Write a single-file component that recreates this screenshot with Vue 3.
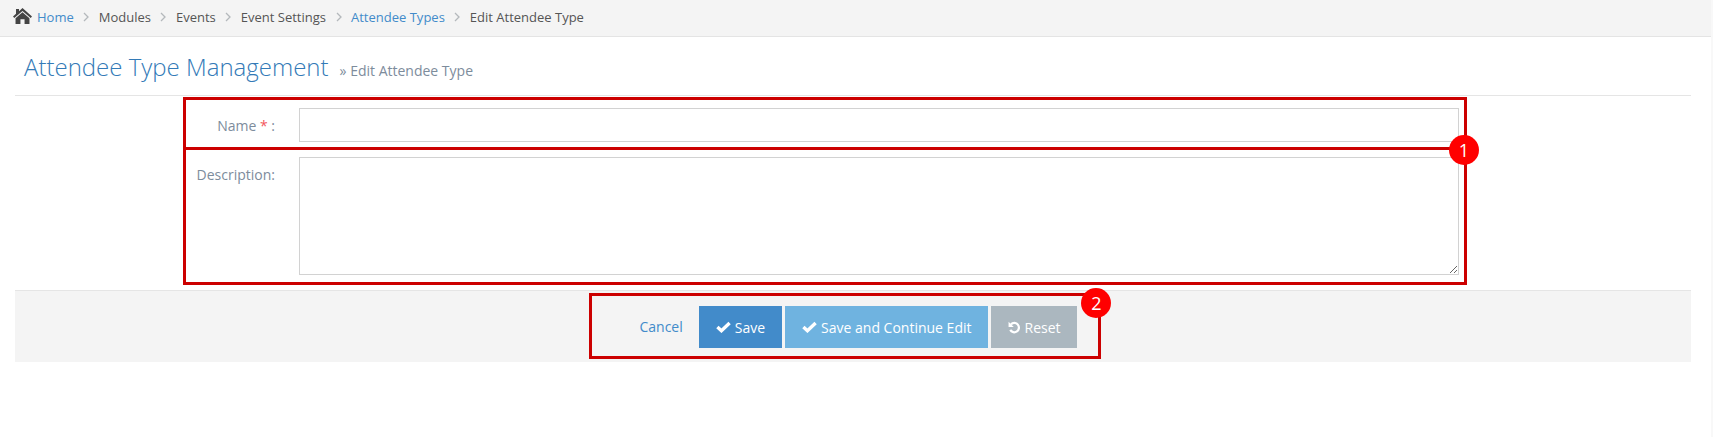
<template>
  <div class="page">
    <nav class="crumbs">
      <svg class="home" viewBox="0 0 24 20" width="19" height="16">
        <path d="M12 0 L24 10.6 L22.4 12.6 L12 3.6 L1.6 12.6 L0 10.6 L3.8 7.2 L3.8 1.2 L7.6 1.2 L7.6 3.9 Z" fill="#444" />
        <path d="M12 5.4 L20.8 12.8 L20.8 20 L14.6 20 L14.6 14 L9.4 14 L9.4 20 L3.2 20 L3.2 12.8 Z" fill="#444" />
      </svg>
      <template v-for="(c, i) in crumbs" :key="c.text">
        <span :class="c.link ? 'link' : 'plain'">{{ c.text }}</span>
        <svg v-if="i < crumbs.length - 1" class="sep" viewBox="0 0 6 10" width="6" height="10">
          <path d="M1 1 L5 5 L1 9" fill="none" stroke="#b4b8bc" stroke-width="1.3" />
        </svg>
      </template>
    </nav>

    <div class="content">
      <div class="heading">
        <h1>Attendee Type Management</h1>
        <small>» Edit Attendee Type</small>
      </div>

      <form class="form" @submit.prevent>
        <div class="row row-name">
          <label>Name <span class="req">*</span> :</label>
          <input type="text" />
        </div>
        <div class="row row-desc">
          <label>Description:</label>
          <textarea></textarea>
        </div>
        <div class="mark mark-one"><span class="badge">1</span><i class="divider"></i></div>
      </form>

      <div class="actions">
        <div class="action-inner">
          <a class="cancel">Cancel</a>
          <button class="btn blue">
            <svg class="check" viewBox="0 0 16 12" width="15" height="12"><path d="M1.5 6 L5.8 10 L14.5 1.8" fill="none" stroke="#fff" stroke-width="3.6" /></svg>
            Save
          </button>
          <button class="btn light">
            <svg class="check" viewBox="0 0 16 12" width="15" height="12"><path d="M1.5 6 L5.8 10 L14.5 1.8" fill="none" stroke="#fff" stroke-width="3.6" /></svg>
            Save and Continue Edit
          </button>
          <button class="btn grey">
            <svg class="undo" viewBox="0 0 14 14" width="13" height="13">
              <path d="M3.2 3.6 A5 5 0 1 1 2.4 9.6" fill="none" stroke="#fff" stroke-width="2.4" />
              <path d="M0.6 0.8 L0.6 6.4 L6.2 6.4 Z" fill="#fff" />
            </svg>
            Reset
          </button>
          <div class="mark mark-two"><span class="badge">2</span></div>
        </div>
      </div>
    </div>
  </div>
</template>

<script setup>
const crumbs = [
  { text: "Home", link: true },
  { text: "Modules" },
  { text: "Events" },
  { text: "Event Settings" },
  { text: "Attendee Types", link: true },
  { text: "Edit Attendee Type" },
];
</script>

<style>
html, body { background: #fff; }
</style>

<style scoped>
.page { width: 1713px; height: 437px; font-family: "Open Sans", sans-serif; font-size: 13px; overflow: hidden; box-sizing: border-box; border-right: 2px solid #f8f8f8; }
.crumbs { height: 37px; box-sizing: border-box; background: #f4f4f4; border-bottom: 1px solid #e4e4e4; display: flex; align-items: center; padding: 0 0 3px 13px; color: #555; }
.home { margin-right: 5px; margin-top: -2px; }
.link { color: #428bca; }
.plain { color: #555; }
.sep { margin: 1px 9.5px 0 9.5px; }
.content { padding: 0 20px 0 15px; }
.heading { height: 59px; box-sizing: border-box; border-bottom: 1px solid #e5e5e5; padding: 12px 0 0 9px; display: flex; align-items: baseline; }
h1 { margin: 0; font-size: 24px; font-weight: 300; color: #337ab7; line-height: 36px; }
small { margin-left: 11px; font-size: 14px; color: #7d8c9c; }
.form { position: relative; width: 1284px; padding-top: 1px; height: 194px; box-sizing: border-box; margin-left: 168px; }
.row { display: grid; grid-template-columns: 84px 1fr; column-gap: 24px; padding: 0 8px; }
.row-name { padding-top: 11px; }
.row-desc { padding-top: 15px; }
label { text-align: right; color: #7d8c9c; font-size: 14px; line-height: 19px; padding-top: 8px; }
.req { color: #f3565d; }
input, textarea { display: block; width: 100%; box-sizing: border-box; border: 1px solid #d2d2d2; background: #fff; padding: 6px 12px; margin: 0; border-radius: 0; outline: none; font: inherit; }
input { height: 34px; }
textarea { height: 118px; }
.mark { position: absolute; border: 3px solid #c00; box-sizing: border-box; }
.mark-one { left: 0; top: 1px; width: 1284px; height: 188px; }
.divider { position: absolute; left: 0; right: 0; top: 47px; height: 3px; background: #c00; }
.actions { height: 72px; box-sizing: border-box; background: #f4f4f4; border-top: 1px solid #e5e5e5; display: flex; justify-content: center; padding-top: 15px; }
.action-inner { position: relative; display: flex; align-items: flex-start; gap: 3px; margin-left: 10px; }
.cancel { color: #428bca; font-size: 14px; line-height: 42px; margin-right: 13px; }
.btn { height: 42px; border: 0; padding: 0 17px; color: #fff; font: inherit; font-size: 14px; display: flex; align-items: center; gap: 4px; white-space: nowrap; }
.blue { background: #428bca; }
.light { background: #6fb3e0; }
.grey { background: #abb7bf; padding: 0 16px 0 17px; gap: 3px; }
.mark-two { left: -50px; top: -13px; width: 512px; height: 66px; }
.badge { position: absolute; width: 30px; height: 30px; border-radius: 50%; background: #f00; color: #fff; font-size: 18px; line-height: 30px; text-align: center; }
.mark-one .badge { right: -15px; top: 35px; z-index: 1; }
.mark-two .badge { right: -13px; top: -8px; }
</style>
